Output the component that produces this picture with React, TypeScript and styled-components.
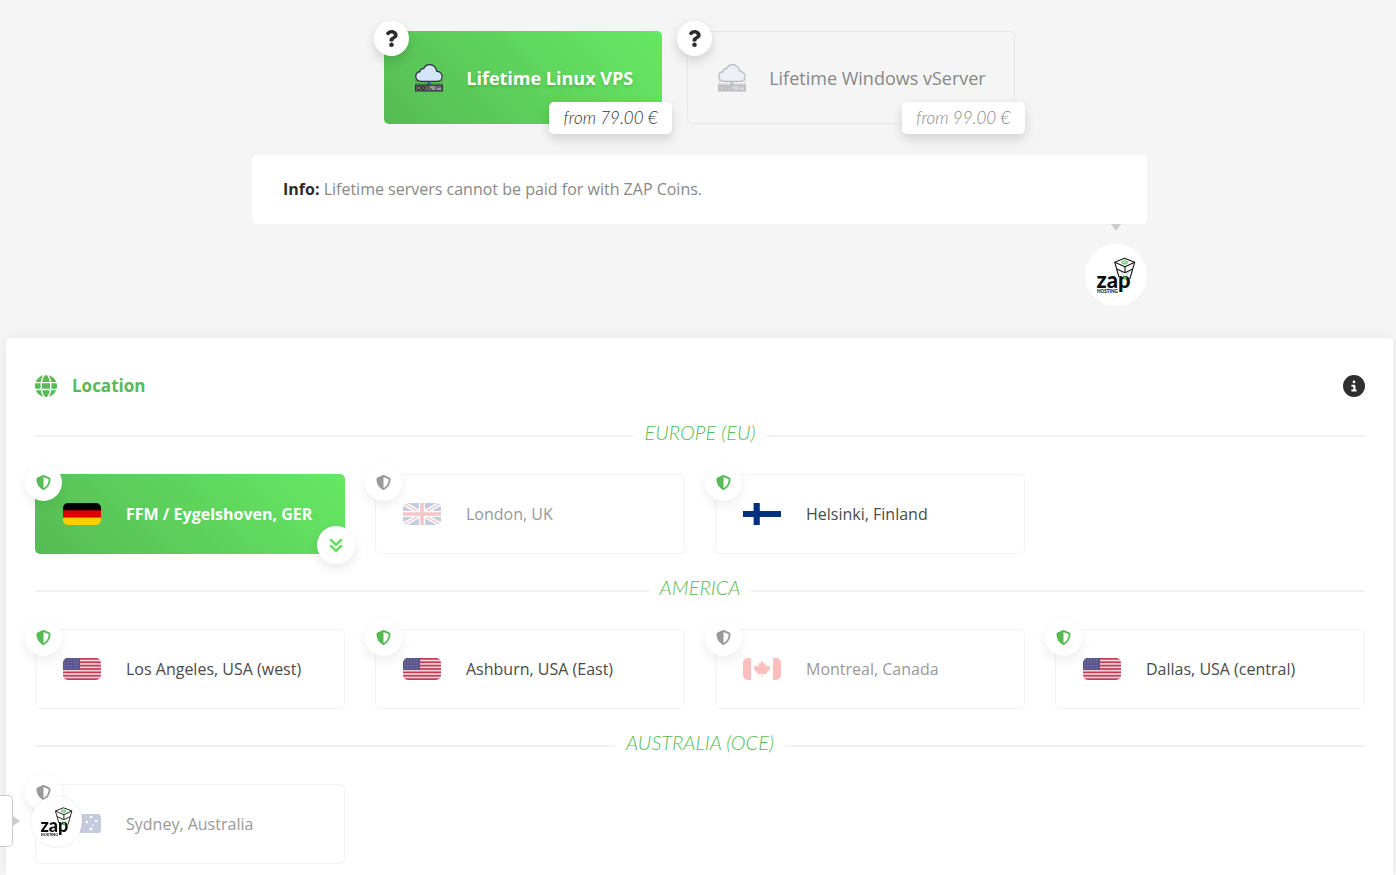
import React from "react";
import styled, { createGlobalStyle, css } from "styled-components";
import { FaQuestion } from "react-icons/fa";
import { FaShieldHalved, FaAnglesDown, FaGlobe, FaCircleInfo } from "react-icons/fa6";

const green = "#56bb54";
const gradient = "linear-gradient(45deg, #56bb54, #66e964)";

const GlobalStyle = createGlobalStyle`
  *, *::before, *::after { box-sizing: border-box; }
  body {
    margin: 0;
    background: #f5f5f5;
    color: #888;
    font-family: "Open Sans", "Noto Sans", sans-serif;
    font-size: 16px;
    line-height: 24px;
  }
`;

const Page = styled.main`
  display: flex;
  flex-direction: column;
  min-height: 100vh;
  padding: 31px 3px 0 6px;
`;

const ProductList = styled.fieldset`
  display: flex;
  flex-wrap: wrap;
  justify-content: center;
  gap: 25px;
  margin: 0;
  padding: 0;
  border: 0;
`;

const Option = styled.div`
  position: relative;
`;

const HiddenRadio = styled.input`
  position: absolute;
  opacity: 0;
  pointer-events: none;
`;

const selectedCard = css`
  border-color: transparent;
  background: ${gradient} border-box;
  color: #fff;
  font-weight: 700;
`;

const ProductCard = styled.label<{ $selected?: boolean }>`
  display: flex;
  align-items: center;
  gap: 23px;
  height: 93px;
  padding: 0 28px 0 30px;
  border: 1px solid #e8e8e8;
  border-radius: 5px;
  color: #888;
  font-size: 18px;
  cursor: pointer;
  ${(p) => p.$selected && selectedCard}
  ${(p) => p.$selected && "text-shadow: 0 2px 3px rgba(0, 0, 0, 0.15);"}
`;

const CloudSvg = styled.svg<{ $faded?: boolean }>`
  flex: none;
  width: 28px;
  height: 28px;
  opacity: ${(p) => (p.$faded ? 0.3 : 1)};
`;

const HelpButton = styled.button`
  position: absolute;
  top: -10px;
  left: -10px;
  display: flex;
  align-items: center;
  justify-content: center;
  width: 35px;
  height: 35px;
  padding: 0;
  border: 0;
  border-radius: 50%;
  background: #fff;
  box-shadow: 0 5px 12px rgba(0, 0, 0, 0.15);
  color: #2b2b2b;
  font-size: 17px;
  cursor: pointer;
`;

const Price = styled.span<{ $muted?: boolean }>`
  position: absolute;
  right: -10px;
  bottom: -10px;
  width: 123px;
  height: 32px;
  border-radius: 5px;
  background: #fff;
  box-shadow: 0 5px 12px rgba(0, 0, 0, 0.15);
  color: ${(p) => (p.$muted ? "#888" : "#333")};
  font-family: Lato, sans-serif;
  font-size: 17px;
  font-style: italic;
  font-weight: 300;
  line-height: 31px;
  text-align: center;
`;

const Notice = styled.aside`
  display: flex;
  flex-direction: column;
  align-items: flex-end;
  width: 100%;
  max-width: 895px;
  margin: 31px auto 32px;
`;

const NoticeText = styled.p`
  width: 100%;
  margin: 0;
  padding: 22px 31px 23px;
  border-radius: 5px;
  background: #fff;

  b { color: #2b2b2b; }
`;

const DownArrow = styled.span`
  margin: 0 26px 13px;
  border: 5px solid transparent;
  border-top: 7px solid #ccc;
  border-bottom: 0;
`;

const Avatar = styled.span<{ $size: number }>`
  display: block;
  width: ${(p) => p.$size}px;
  height: ${(p) => p.$size}px;
  border-radius: 50%;
  background: #fff;

  svg { display: block; width: 100%; height: 100%; }
`;

const Panel = styled.section`
  flex: 1;
  padding: 36px 28px 2px 29px;
  border-radius: 5px 5px 0 0;
  background: #fff;
  box-shadow: 0 0 14px rgba(0, 0, 0, 0.06);
`;

const PanelHeader = styled.header`
  display: flex;
  align-items: center;
  gap: 15px;
  margin-bottom: 10px;
  color: ${green};
  font-size: 22px;
`;

const PanelTitle = styled.h2`
  flex: 1;
  margin: 0;
  font-size: 17px;
  font-weight: 700;
`;

const InfoButton = styled.button`
  display: flex;
  padding: 0;
  border: 0;
  background: none;
  color: #2f2f2f;
  font-size: 22px;
  cursor: pointer;
`;

const Region = styled.fieldset`
  margin: 0;
  padding: 0;
  border: 0;
`;

const RegionTitle = styled.h3`
  display: flex;
  align-items: center;
  gap: 11px;
  margin: 0;
  padding-top: 13px;
  color: ${green};
  font-family: Lato, sans-serif;
  font-size: 20px;
  font-style: italic;
  font-weight: 300;
  line-height: 22px;
  text-transform: uppercase;

  &::before, &::after {
    content: "";
    flex: 1;
    height: 2px;
    margin-top: 8px;
    background: #f1f1f1;
  }
`;

const LocationGrid = styled.div`
  display: grid;
  grid-template-columns: repeat(4, 1fr);
  gap: 30px;
  padding: 31px 0 9px;
`;

const LocationCard = styled.label<{ $state: State }>`
  display: flex;
  align-items: center;
  gap: 25px;
  height: 80px;
  padding: 0 27px;
  border: 1px solid #f3f3f3;
  border-radius: 5px;
  color: ${(p) => (p.$state === "off" ? "#999" : "#4a4a4a")};
  white-space: nowrap;
  cursor: pointer;
  ${(p) => p.$state === "selected" && selectedCard}
`;

const Flag = styled.svg<{ $faded: boolean }>`
  flex: none;
  width: 38px;
  height: 22px;
  border-radius: 5px;
  opacity: ${(p) => (p.$faded ? 0.25 : 1)};
`;

const ShieldBadge = styled.span<{ $active: boolean }>`
  position: absolute;
  top: -10px;
  left: -10px;
  display: flex;
  align-items: center;
  justify-content: center;
  width: 37px;
  height: 37px;
  border-radius: 50%;
  background: #fff;
  box-shadow: 0 5px 12px rgba(0, 0, 0, 0.07);
  color: ${(p) => (p.$active ? green : "#999")};
  font-size: 15px;
`;

const ExpandButton = styled.button`
  position: absolute;
  right: -10px;
  bottom: -10px;
  display: flex;
  align-items: center;
  justify-content: center;
  width: 38px;
  height: 38px;
  padding: 0;
  border: 0;
  border-radius: 50%;
  background: #fff;
  box-shadow: 0 5px 12px rgba(0, 0, 0, 0.09);
  color: #62dd60;
  font-size: 16px;
  cursor: pointer;

  svg { stroke: currentColor; stroke-width: 24px; }
`;

const ChatWidget = styled.button`
  position: fixed;
  bottom: 28px;
  left: 0;
  display: flex;
  align-items: center;
  padding: 0;
  border: 0;
  background: none;
  cursor: pointer;
`;

const ChatTab = styled.span`
  width: 13px;
  height: 52px;
  border: 1px solid #ccc;
  border-left: 0;
  border-radius: 0 5px 5px 0;
  background: #fff;
`;

const RightArrow = styled.span`
  margin-right: 11px;
  border: 5px solid transparent;
  border-left: 7px solid #ccc;
  border-right: 0;
`;

const ChatAvatar = styled(Avatar)`
  box-shadow: 0 0 2px rgba(0, 0, 0, 0.15);
`;

type State = "selected" | "on" | "off";
type Country = "de" | "uk" | "fi" | "us" | "ca" | "au";

const CloudServer = ({ faded }: { faded?: boolean }) => (
  <CloudSvg viewBox="0 0 28 28" $faded={faded} aria-hidden="true">
    <path
      d="M6 17.3C2.700 17.300 .8 15.300 .8 12.600C.8 10 2.700 8 5 7.700C5.100 5.600 6.800 4.300 8.700 4.700C9.700 2.200 11.800 .7 14.500 .7C18.500 .7 21.400 3.700 21.600 7.200C24.700 7.400 27.200 9.700 27.200 12.500C27.200 15.300 25 17.300 22 17.300Z"
      fill="#d3e6f7" stroke="#2e2b3d" strokeWidth="1.200"
    />
    <path d="M1 16V20M27 16V20M1 19.500H27" stroke="#555" strokeWidth=".7" strokeDasharray="1.500 1" />
    <rect x="12.500" y="17.500" width="3" height="3.500" fill="#2c5daa" />
    <rect x=".6" y="21" width="26.800" height="6" fill="#696575" stroke="#2a2733" strokeWidth="1" />
    <circle cx="4" cy="24" r="1.500" fill="#bbb" stroke="#222" />
    <circle cx="8" cy="24" r="1.500" fill="#8d7c7c" stroke="#222" />
    <circle cx="11.800" cy="24" r="1.300" fill="#ddd" stroke="#222" />
    <path d="M15 23H20M17 25H20M22 25H26" stroke="#ddd" strokeWidth=".8" />
  </CloudSvg>
);

const ZapLogo = () => (
  <svg viewBox="0 0 62 62" role="img" aria-label="ZAP Hosting">
    <g fill="none" stroke="#151515" strokeWidth="1.100" strokeLinejoin="round">
      <path d="M39.500 14.300L49.700 18.200L40 22.800L29.700 18.200Z" />
      <path d="M29.700 18.200L34 33M49.700 18.200L44.800 35M40 22.800V28.500" />
      <path d="M31.700 25L40 28.700L47.800 25" />
    </g>
    <path d="M36 27.500L40 34L44 27.500" fill="none" stroke="#999" strokeWidth=".6" />
    <ellipse cx="39.800" cy="18.400" rx="3" ry="1.600" fill="#b7ecb9" stroke="#3fc24c" strokeWidth=".9" />
    <text x="11.500" y="44" fontFamily="Lato, sans-serif" fontSize="22" fontWeight="900" fill="#0d0d0d">zap</text>
    <text x="12" y="49" fontFamily="Lato, sans-serif" fontSize="4.600" fontWeight="900" fill="#0d0d0d">HOSTING</text>
    <circle cx="40" cy="34" r="1.700" fill="#3fc24c" />
  </svg>
);

const star = (x: number, y: number, r: number) => (
  <circle key={`${x}-${y}`} cx={x} cy={y} r={r} fill="#fff" />
);

const UnionJack = () => (
  <>
    <rect width="38" height="22" fill="#1c3a8c" />
    <path d="M0 0L38 22M38 0L0 22" stroke="#fff" strokeWidth="4.500" />
    <path d="M0 0L38 22M38 0L0 22" stroke="#d8202f" strokeWidth="1.500" />
    <path d="M19 0V22M0 11H38" stroke="#fff" strokeWidth="6" />
    <path d="M19 0V22M0 11H38" stroke="#d8202f" strokeWidth="3.600" />
  </>
);

const flags: Record<Country, React.ReactNode> = {
  de: (
    <>
      <rect width="38" height="8" fill="#000" />
      <rect y="7.300" width="38" height="7.400" fill="#d00" />
      <rect y="14.700" width="38" height="7.300" fill="#ffce00" />
    </>
  ),
  uk: <UnionJack />,
  fi: (
    <>
      <rect width="38" height="22" fill="#fff" />
      <path d="M13.700 0V22M0 11H38" stroke="#04317f" strokeWidth="6.200" />
    </>
  ),
  us: (
    <>
      <rect width="38" height="22" fill="#f1d3d9" />
      {[0, 1, 2, 3, 4, 5, 6].map((i) => (
        <rect key={i} y={i * 3.385} width="38" height="1.700" fill="#c43c56" />
      ))}
      <rect width="17" height="12" fill="#575589" />
      {[2, 5, 8, 11, 14].flatMap((x) => [2, 4.7, 7.4, 10].map((y) => (
        <circle key={`${x}-${y}`} cx={x} cy={y} r=".5" fill="#aaa9cc" />
      )))}
    </>
  ),
  ca: (
    <>
      <rect width="38" height="22" fill="#fff" />
      <path d="M0 0H8V22H0ZM30 0H38V22H30Z" fill="#ff0000" />
      <path
        d="M19 2.500L20.700 5.700L22.600 4.800L21.900 9L24.200 7L24.800 8.300L27.300 8L26.400 10.500L27.600 11.300L23.500 14.600L24 16.200L19.400 15.700V19.500H18.600V15.700L14 16.200L14.500 14.600L10.400 11.300L11.600 10.500L10.700 8L13.200 8.300L13.800 7L16.100 9L15.400 4.800L17.300 5.700Z"
        fill="#ff0000"
      />
    </>
  ),
  au: (
    <>
      <rect y="1" width="38" height="19" fill="#1a3480" />
      <g transform="translate(0 1) scale(.5 .45)"><UnionJack /></g>
      {[[28, 4, 1.3], [24, 9, 1.3], [33, 8, 1.3], [30, 12, 0.8], [28, 16, 1.5], [9, 16, 2]].map(([x, y, r]) => star(x, y, r))}
    </>
  ),
};

const products = [
  { name: "Lifetime Linux VPS", price: "from 79.00 €", selected: true },
  { name: "Lifetime Windows vServer", price: "from 99.00 €", selected: false },
];

const regions: { title: string; places: { name: string; flag: Country; state: State }[] }[] = [
  {
    title: "Europe (EU)",
    places: [
      { name: "FFM / Eygelshoven, GER", flag: "de", state: "selected" },
      { name: "London, UK", flag: "uk", state: "off" },
      { name: "Helsinki, Finland", flag: "fi", state: "on" },
    ],
  },
  {
    title: "America",
    places: [
      { name: "Los Angeles, USA (west)", flag: "us", state: "on" },
      { name: "Ashburn, USA (East)", flag: "us", state: "on" },
      { name: "Montreal, Canada", flag: "ca", state: "off" },
      { name: "Dallas, USA (central)", flag: "us", state: "on" },
    ],
  },
  {
    title: "Australia (OCE)",
    places: [{ name: "Sydney, Australia", flag: "au", state: "off" }],
  },
];

export default function App() {
  return (
    <>
      <GlobalStyle />
      <Page>
        <ProductList aria-label="Product">
          {products.map((p, i) => (
            <Option key={p.name}>
              <HiddenRadio type="radio" name="product" id={`product-${i}`} defaultChecked={p.selected} />
              <ProductCard htmlFor={`product-${i}`} $selected={p.selected}>
                <CloudServer faded={!p.selected} />
                {p.name}
              </ProductCard>
              <HelpButton type="button" aria-label={`About ${p.name}`}>
                <FaQuestion />
              </HelpButton>
              <Price $muted={!p.selected}>{p.price}</Price>
            </Option>
          ))}
        </ProductList>

        <Notice>
          <NoticeText>
            <b>Info:</b> Lifetime servers cannot be paid for with ZAP Coins.
          </NoticeText>
          <DownArrow />
          <Avatar $size={62}><ZapLogo /></Avatar>
        </Notice>

        <Panel>
          <PanelHeader>
            <FaGlobe />
            <PanelTitle>Location</PanelTitle>
            <InfoButton type="button" aria-label="Location info"><FaCircleInfo /></InfoButton>
          </PanelHeader>
          {regions.map((region) => (
            <Region key={region.title} aria-label={region.title}>
              <RegionTitle>{region.title}</RegionTitle>
              <LocationGrid>
                {region.places.map((place) => (
                  <Option key={place.name}>
                    <HiddenRadio
                      type="radio"
                      name="location"
                      id={place.name}
                      defaultChecked={place.state === "selected"}
                      disabled={place.state === "off"}
                    />
                    <LocationCard htmlFor={place.name} $state={place.state}>
                      <Flag viewBox="0 0 38 22" $faded={place.state === "off"} aria-hidden="true">
                        {flags[place.flag]}
                      </Flag>
                      {place.name}
                    </LocationCard>
                    <ShieldBadge $active={place.state !== "off"}><FaShieldHalved /></ShieldBadge>
                    {place.state === "selected" && (
                      <ExpandButton type="button" aria-label="Show details"><FaAnglesDown /></ExpandButton>
                    )}
                  </Option>
                ))}
              </LocationGrid>
            </Region>
          ))}
        </Panel>

        <ChatWidget type="button" aria-label="Open chat">
          <ChatTab />
          <RightArrow />
          <ChatAvatar $size={51}><ZapLogo /></ChatAvatar>
        </ChatWidget>
      </Page>
    </>
  );
}
